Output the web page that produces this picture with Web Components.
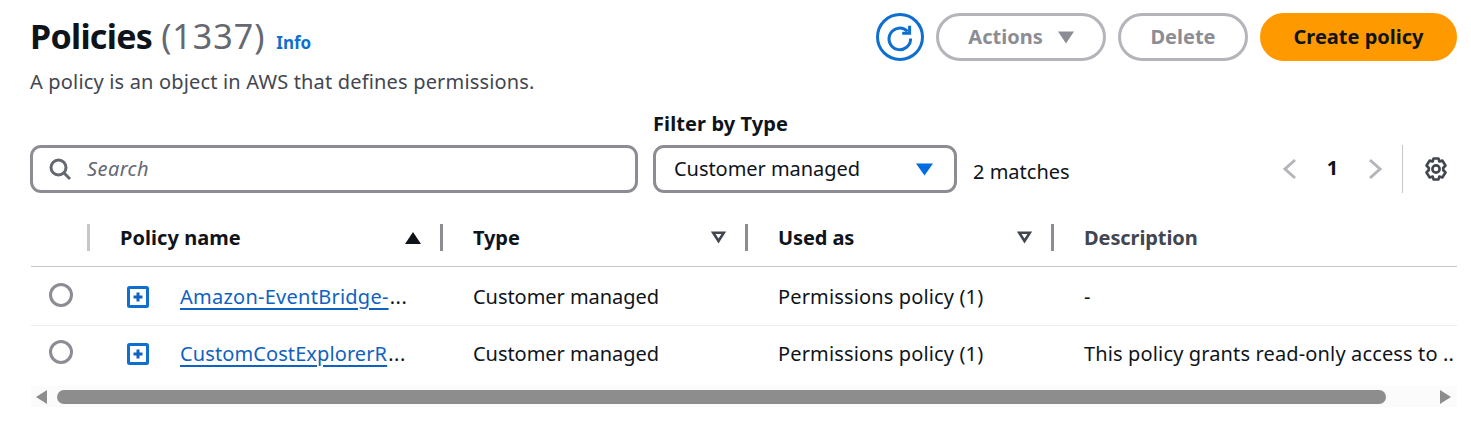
<!DOCTYPE html>
<html lang="en">
<head>
<meta charset="utf-8">
<title>Policies</title>
<style>
  html, body { margin: 0; background: #fff; }
  body { font-family: "Noto Sans", "Open Sans", sans-serif; color: #0f141a; }
</style>
</head>
<body>
<policies-page>
  <page-header slot="header" count="(1337)" description="A policy is an object in AWS that defines permissions.">
    Policies
    <refresh-button slot="actions"></refresh-button>
    <pill-button slot="actions" disabled caret width="170">Actions</pill-button>
    <pill-button slot="actions" disabled width="130">Delete</pill-button>
    <pill-button slot="actions" primary width="197">Create policy</pill-button>
  </page-header>
  <filter-bar slot="filters"></filter-bar>
  <policy-table slot="table">
    <policy-row name="Amazon-EventBridge-" spacing="0.25" type="Customer managed" used="Permissions policy (1)" description="-"></policy-row>
    <policy-row name="CustomCostExplorerR" spacing="0.1" type="Customer managed" used="Permissions policy (1)" description="This policy grants read-only access to .."></policy-row>
  </policy-table>
</policies-page>

<script>
  (function () {
    'use strict';

    const COLS = '57px 353px 305px 306px 1fr';

    function shadow(el, html) {
      el.attachShadow({ mode: 'open' }).innerHTML = html;
      return el.shadowRoot;
    }

    class PoliciesPage extends HTMLElement {
      constructor() {
        super();
        shadow(this, `
          <style>
            :host { display: block; padding: 13px 14px 0 31px; box-sizing: border-box; width: 1471px; height: 447px; overflow: hidden; }
            .filters { margin-top: 14px; margin-left: -1px; }
            .table { margin-top: 17px; }
          </style>
          <slot name="header"></slot>
          <div class="filters"><slot name="filters"></slot></div>
          <div class="table"><slot name="table"></slot></div>
        `);
      }
    }

    class PageHeader extends HTMLElement {
      constructor() {
        super();
        const count = this.getAttribute('count') || '';
        const description = this.getAttribute('description') || '';
        shadow(this, `
          <style>
            :host { display: flex; justify-content: space-between; align-items: flex-start; }
            .title { display: flex; align-items: baseline; height: 48px; line-height: 46px; font-size: 34px; font-weight: 700; letter-spacing: -0.7px; white-space: nowrap; margin-left: -1px; }
            .count { font-weight: 400; color: #656871; margin-left: 9px; letter-spacing: 1px; }
            .info { font-size: 17px; font-weight: 700; color: #0f6fd1; margin-left: 11px; letter-spacing: 0; }
            .desc { font-size: 20px; line-height: 28px; color: #424650; margin-top: 7px; letter-spacing: 0.17px; margin-left: -1px; }
            .actions { display: flex; gap: 12px; }
          </style>
          <div>
            <div class="title"><slot></slot><span class="count">${count}</span><span class="info">Info</span></div>
            <div class="desc">${description}</div>
          </div>
          <div class="actions"><slot name="actions"></slot></div>
        `);
      }
    }

    class RefreshButton extends HTMLElement {
      constructor() {
        super();
        shadow(this, `
          <style>
            :host { display: block; width: 48px; height: 48px; }
            svg { display: block; }
          </style>
          <svg width="48" height="48" viewBox="0 0 48 48" fill="none">
            <circle cx="24" cy="24" r="22.5" stroke="#0f6fd1" stroke-width="3"/>
            <path d="M31.6 18.4 A10.8 10.8 0 1 0 34.6 25.5" stroke="#0f6fd1" stroke-width="3"/>
            <path d="M33.6 12.8 V20.2 H26.2" stroke="#0f6fd1" stroke-width="3" stroke-linejoin="miter"/>
          </svg>
        `);
      }
    }

    class PillButton extends HTMLElement {
      constructor() {
        super();
        const primary = this.hasAttribute('primary');
        const caret = this.hasAttribute('caret');
        const width = this.getAttribute('width');
        shadow(this, `
          <style>
            :host { display: block; }
            .btn {
              box-sizing: border-box; width: ${width}px; height: 48px; border-radius: 24px;
              display: flex; align-items: center; justify-content: center; gap: 15px;
              font-size: 20px; font-weight: 700; letter-spacing: 0;
              border: 3px solid ${primary ? '#ff9900' : '#b4b4bb'};
              background: ${primary ? '#ff9900' : '#fff'};
              color: ${primary ? '#0f141a' : '#8c8c94'};
            }
            .btn span { margin-top: -2px; }
            svg { display: block; margin-top: 1px; }
          </style>
          <div class="btn">
            <span><slot></slot></span>
            ${caret ? '<svg width="16" height="13" viewBox="0 0 16 13"><path d="M0 0.5H16L8 12.5Z" fill="#8c8c94"/></svg>' : ''}
          </div>
        `);
      }
    }

    class FilterBar extends HTMLElement {
      constructor() {
        super();
        shadow(this, `
          <style>
            :host { display: grid; grid-template-columns: 608px 304px auto 1fr; column-gap: 15px; align-items: end; }
            .box {
              box-sizing: border-box; height: 48px; border: 3px solid #8c8c94; border-radius: 11px;
              display: flex; align-items: center; background: #fff;
            }
            .box span { margin-top: -2px; }
            .search { padding-left: 15px; gap: 15px; font-style: italic; color: #656871; font-size: 20px; letter-spacing: 0.4px; }
            .label { font-size: 20px; font-weight: 700; line-height: 28px; margin-bottom: 7px; letter-spacing: 0.1px; }
            .select { justify-content: space-between; padding: 0 21px 0 18px; font-size: 20px; color: #0f141a; letter-spacing: -0.05px; }
            .matches { font-size: 20px; height: 42px; line-height: 42px; color: #0f141a; margin-left: 1px; letter-spacing: 0; }
            .pager { display: flex; align-items: center; justify-content: flex-end; height: 48px; padding-right: 9px; }
            .num { font-size: 20px; font-weight: 700; width: 69px; text-align: center; margin-top: -3px; }
            .rule { width: 1px; height: 48px; background: #c6c6cd; margin: 0 21px 0 19px; }
            svg { display: block; flex: none; }
          </style>
          <div class="box search">
            <svg width="24" height="24" viewBox="0 0 24 24" fill="none" stroke="#656871" stroke-width="3">
              <circle cx="10.5" cy="10.5" r="7.5"/><path d="M15.8 15.8 22 22"/>
            </svg>
            <span>Search</span>
          </div>
          <div>
            <div class="label">Filter by Type</div>
            <div class="box select"><span>Customer managed</span>
              <svg width="17" height="13" viewBox="0 0 17 13"><path d="M0 0.5H17L8.5 12.5Z" fill="#006ce0"/></svg>
            </div>
          </div>
          <div class="matches">2 matches</div>
          <div class="pager">
            <svg width="16" height="24" viewBox="0 0 16 24" fill="none" stroke="#b4b4bb" stroke-width="3"><path d="M13 3 3 12 13 21"/></svg>
            <span class="num">1</span>
            <svg width="16" height="24" viewBox="0 0 16 24" fill="none" stroke="#b4b4bb" stroke-width="3"><path d="M3 3 13 12 3 21"/></svg>
            <span class="rule"></span>
            <svg width="24" height="24" viewBox="0 0 24 24" fill="none" stroke="#424650" stroke-width="2.6" stroke-linejoin="round">
              <circle cx="12" cy="12" r="3.6"/>
              <path d="M9.500 1.500h5l.8 3 3-1 3.200 5-2.300 2.500v2l2.300 2.500-3.200 5-3-1-.8 3h-5l-.8-3-3 1-3.200-5 2.300-2.500v-2L2.500 8.500l3.200-5 3 1z"/>
            </svg>
          </div>
        `);
      }
    }

    class PolicyTable extends HTMLElement {
      constructor() {
        super();
        const sep = (c) => `<i class="sep" style="background:${c}"></i>`;
        const down = '<svg width="15" height="13" viewBox="0 0 15 13" fill="none" stroke="#424650" stroke-width="2.6"><path d="M2.200 1.800H12.800L7.500 10Z"/></svg>';
        const up = '<svg width="16" height="12" viewBox="0 0 16 12"><path d="M0 12H16L8 0Z" fill="#0f141a"/></svg>';
        shadow(this, `
          <style>
            :host { display: block; }
            .head { display: grid; grid-template-columns: ${COLS}; height: 57px; border-bottom: 1px solid #c6c6cd; box-sizing: border-box; padding-bottom: 1px; align-items: center; font-size: 20px; font-weight: 700; color: #0f141a; letter-spacing: -0.1px; }
            .th { display: flex; align-items: center; justify-content: space-between; height: 27px; position: relative; padding-left: 32px; padding-right: 20px; }
            .th.muted { color: #424650; }
            .th svg { display: block; }
            .first { letter-spacing: 0.05px; }
            .sep { width: 3px; height: 27px; flex: none; position: absolute; left: -1px; top: 0; }
            .foot { display: flex; align-items: center; height: 21px; margin-top: 4px; background: #fbfbfb; }
            .track { flex: 1; height: 14px; margin: 0 14px 0 10px; }
            .thumb { width: 1329px; height: 14px; border-radius: 7px; background: #8d8d8d; }
            .arrow { display: block; flex: none; }
          </style>
          <div class="head">
            <div></div>
            <div class="th">${sep('#c6c6cd')}<span class="first">Policy name</span>${up}</div>
            <div class="th">${sep('#8c8c94')}<span>Type</span>${down}</div>
            <div class="th">${sep('#8c8c94')}<span>Used as</span>${down}</div>
            <div class="th muted">${sep('#8c8c94')}<span>Description</span></div>
          </div>
          <slot></slot>
          <div class="foot">
            <svg class="arrow" style="margin-left:5px" width="11" height="14" viewBox="0 0 11 14"><path d="M11 0V14L0 7Z" fill="#8d8d8d"/></svg>
            <div class="track"><div class="thumb"></div></div>
            <svg class="arrow" style="margin-right:6px" width="11" height="14" viewBox="0 0 11 14"><path d="M0 0V14L11 7Z" fill="#8d8d8d"/></svg>
          </div>
        `);
      }
    }

    class PolicyRow extends HTMLElement {
      constructor() {
        super();
        const attr = (n) => this.getAttribute(n) || '';
        shadow(this, `
          <style>
            :host { display: grid; grid-template-columns: ${COLS}; height: 59px; box-sizing: border-box; align-items: center; font-size: 20px; color: #0f141a; border-bottom: 1px solid #ebebf0; letter-spacing: -0.05px; }
            :host(:last-child) { border-bottom: none; height: 56px; padding-bottom: 2px; }
            .radio { width: 24px; height: 24px; box-sizing: border-box; border: 3px solid #8c8c94; border-radius: 50%; margin-left: 18px; margin-top: -2px; }
            .name { display: flex; align-items: center; }
            .icon { flex: none; margin-left: 39px; margin-right: 31px; margin-top: 1px; display: block; }
            .link { display: flex; white-space: nowrap; color: #0f62c0; letter-spacing: ${attr('spacing')}px; }
            .link span { text-decoration: underline; text-underline-offset: 4px; text-decoration-thickness: 2px; }
            .dots { color: #0f141a; letter-spacing: 0.6px; margin-left: 1px; }
            .cell { padding-left: 32px; white-space: nowrap; }
            .wide { letter-spacing: 0.14px; }
          </style>
          <div class="radio"></div>
          <div class="name">
            <svg class="icon" width="22" height="22" viewBox="0 0 22 22">
              <rect x="1.500" y="1.500" width="19" height="19" rx="1" fill="none" stroke="#0f6fd1" stroke-width="3"/>
              <path d="M11 6.500v9M6.500 11h9" stroke="#0f62c0" stroke-width="3"/>
            </svg>
            <div class="link"><span>${attr('name')}</span><b class="dots" style="font-weight:400">...</b></div>
          </div>
          <div class="cell">${attr('type')}</div>
          <div class="cell wide">${attr('used')}</div>
          <div class="cell wide">${attr('description')}</div>
        `);
      }
    }

    customElements.define('policies-page', PoliciesPage);
    customElements.define('page-header', PageHeader);
    customElements.define('refresh-button', RefreshButton);
    customElements.define('pill-button', PillButton);
    customElements.define('filter-bar', FilterBar);
    customElements.define('policy-table', PolicyTable);
    customElements.define('policy-row', PolicyRow);
  })();
</script>
</body>
</html>
